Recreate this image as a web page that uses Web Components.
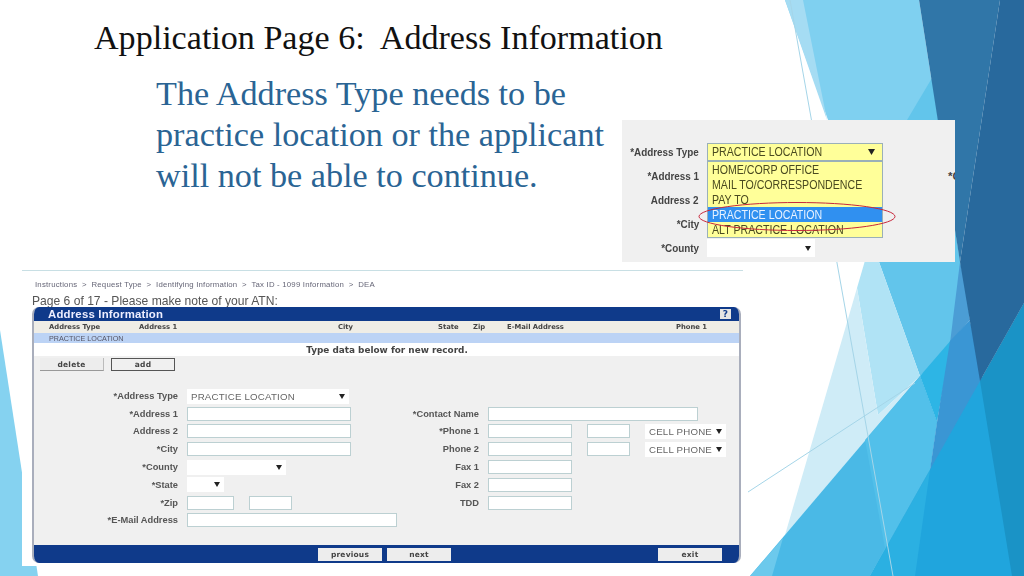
<!DOCTYPE html>
<html>
<head>
<meta charset="utf-8">
<title>Application Page 6</title>
<style>
  html, body { margin: 0; padding: 0; background: #fff; }
  body { width: 1024px; height: 576px; overflow: hidden; font-family: 'Liberation Sans', Arial, sans-serif; }
</style>
</head>
<body>
<slide-page>
  <span slot="title">Application Page 6:  Address Information</span>
  <span slot="body">The Address Type needs to be<br>practice location or the applicant<br>will not be able to continue.</span>
  <dropdown-shot slot="pictures"></dropdown-shot>
  <address-shot slot="pictures"></address-shot>
</slide-page>

<script>
// small form pieces first, they are used by both screenshots
class TextBox extends HTMLElement {
  connectedCallback() {
    this.attachShadow({ mode: 'open' });
    this.shadowRoot.innerHTML = `
      <style>
        :host {
          display: block;
          box-sizing: border-box;
          width: var(--w, 84px);
          height: 14px;
          background: #fff;
          border: 1px solid #bcd0d2;
        }
      </style>`;
    this.style.setProperty('--w', (this.getAttribute('w') || 84) + 'px');
  }
}
customElements.define('text-box', TextBox);

class FakeSelect extends HTMLElement {
  connectedCallback() {
    this.attachShadow({ mode: 'open' });
    this.shadowRoot.innerHTML = `
      <style>
        :host {
          display: flex;
          align-items: center;
          box-sizing: border-box;
          height: var(--sel-h, 15px);
          padding: 0 4px 0 4px;
          background: #fff;
          color: #666;
          font-family: 'Liberation Sans', sans-serif;
          font-size: var(--sel-size, 9.7px);
          letter-spacing: .2px;
          white-space: nowrap;
        }
        svg { flex: none; margin-left: auto; }
      </style>
      <slot></slot>
      <svg width="6" height="5" viewBox="0 0 6 5"><path d="M0 0H6L3 5Z" fill="#222"/></svg>`;
    this.style.width = (this.getAttribute('w') || 100) + 'px';
  }
}
customElements.define('fake-select', FakeSelect);

class FormRow extends HTMLElement {
  connectedCallback() {
    this.attachShadow({ mode: 'open' });
    this.shadowRoot.innerHTML = `
      <style>
        :host {
          display: flex;
          align-items: center;
          height: var(--row-h, 17.8px);
          font-family: 'Liberation Sans', sans-serif;
        }
        .label {
          display: flex;
          justify-content: flex-end;
          width: var(--label-w, 144px);
          flex: none;
          margin-right: var(--label-gap, 9px);
          font-weight: bold;
          font-size: var(--label-size, 9.3px);
          color: var(--label-color, #555);
          white-space: nowrap;
        }
        .label span {
          flex: none;
          transform: scaleX(var(--label-sx, 1));
          transform-origin: right center;
        }
        .fields { display: flex; align-items: center; }
        ::slotted(*) { margin-right: var(--field-gap, 15px); }
      </style>
      <div class="label"><span></span></div>
      <div class="fields"><slot></slot></div>`;
    this.shadowRoot.querySelector('.label span').textContent = this.getAttribute('label') || '';
  }
}
customElements.define('form-row', FormRow);

class ShotButton extends HTMLElement {
  connectedCallback() {
    this.attachShadow({ mode: 'open' });
    this.shadowRoot.innerHTML = `
      <style>
        :host {
          display: flex;
          align-items: center;
          justify-content: center;
          box-sizing: border-box;
          width: 64px;
          height: 13px;
          background: #ededed;
          color: #444;
          font: bold 7.5px 'DejaVu Sans', sans-serif;
          letter-spacing: .2px;
        }
        :host([outlined]) { border: 1px solid #555; background: #f0f0f0; }
        :host([shadowed]) { border-bottom: 1px solid #999; border-right: 1px solid #bbb; }
      </style>
      <slot></slot>`;
  }
}
customElements.define('shot-button', ShotButton);

// upper right crop with the open list
class DropdownShot extends HTMLElement {
  connectedCallback() {
    this.attachShadow({ mode: 'open' });
    this.shadowRoot.innerHTML = `
      <style>
        :host {
          position: absolute;
          left: 622px;
          top: 120px;
          width: 333px;
          height: 142px;
          background: #f0f0f0;
          overflow: hidden;
          font-family: 'Liberation Sans', sans-serif;
          --row-h: 24px;
          --label-w: 77px;
          --label-gap: 8px;
          --label-size: 11.5px;
          --label-sx: .86;
          --label-color: #444;
          --sel-h: 18px;
          --sel-size: 12px;
        }
        .rows { padding-top: 20px; }
        .list {
          position: absolute;
          left: 85px;
          top: 23px;
          width: 176px;
          box-sizing: border-box;
          border: 1px solid #9ab0b8;
          background: #ffff99;
          color: #4a4a20;
          font-size: 12px;
          line-height: 15px;
        }
        .current {
          display: flex;
          justify-content: space-between;
          align-items: center;
          height: 16px;
          padding: 0 7px 0 4px;
          border-bottom: 2px solid #9ab0b8;
        }
        .item { height: 15px; line-height: 16px; padding-left: 4px; white-space: nowrap; }
        .item.on { background: #3090f0; color: #e8f2ff; }
        .list span { display: inline-block; transform: scaleX(.885); transform-origin: left center; }
        .other { position: absolute; left: 326px; top: 50px; font: bold 11.5px 'Liberation Sans', sans-serif; color: #444; }
        svg.ring { position: absolute; left: 0; top: 0; pointer-events: none; }
      </style>
      <div class="rows">
        <form-row label="*Address Type"></form-row>
        <form-row label="*Address 1"></form-row>
        <form-row label="Address 2"></form-row>
        <form-row label="*City"></form-row>
        <form-row label="*County"><fake-select w="108"></fake-select></form-row>
      </div>
      <div class="list">
        <div class="current"><span>PRACTICE LOCATION</span>
          <svg width="7" height="6" viewBox="0 0 6 5"><path d="M0 0H6L3 5Z" fill="#222"/></svg>
        </div>
        <div class="item"><span>HOME/CORP OFFICE</span></div>
        <div class="item"><span>MAIL TO/CORRESPONDENCE</span></div>
        <div class="item"><span>PAY TO</span></div>
        <div class="item on"><span>PRACTICE LOCATION</span></div>
        <div class="item"><span>ALT PRACTICE LOCATION</span></div>
      </div>
      <div class="other">*C</div>
      <svg class="ring" width="333" height="142" viewBox="0 0 333 142">
        <ellipse cx="175" cy="96.5" rx="98" ry="14" fill="none" stroke="#c8283c" stroke-width="1"/>
      </svg>`;
  }
}
customElements.define('dropdown-shot', DropdownShot);

// the big screenshot of the address form
class AddressShot extends HTMLElement {
  connectedCallback() {
    this.attachShadow({ mode: 'open' });
    this.shadowRoot.innerHTML = `
      <style>
        :host {
          position: absolute;
          left: 22px;
          top: 268px;
          width: 723px;
          height: 298px;
          background: #fff;
          filter: blur(.35px);
          color: #444;
          font-family: 'Liberation Sans', sans-serif;
        }
        .rule { height: 1px; margin-top: 2px; width: 721px; background: #c8dfe4; }
        .crumbs {
          margin: 9px 0 0 13px;
          height: 9px;
          font-size: 7.8px;
          line-height: 9px;
          letter-spacing: .2px;
          color: #667;
          white-space: nowrap;
        }
        .note {
          margin: 6px 0 0 10px;
          height: 12px;
          font-size: 12.1px;
          line-height: 13px;
          color: #555;
          white-space: nowrap;
        }
        .panel {
          margin: 0 0 0 10px;
          width: 709px;
          height: 256px;
          box-sizing: border-box;
          display: flex;
          flex-direction: column;
          border-radius: 7px;
          overflow: hidden;
          background: #fff;
          border-left: 2px solid #a9aebc;
          border-right: 2px solid #a9aebc;
        }
        .bar {
          flex: none;
          display: flex;
          align-items: center;
          margin: 0 -2px;
          background: #0f3a8a;
        }
        .top { height: 14px; justify-content: space-between; padding: 0 10px 0 16px; color: #eef; font: bold 11.4px 'Liberation Sans', sans-serif; letter-spacing: .2px; }
        .help {
          width: 11px;
          height: 10px;
          background: #e4e4e4;
          color: #0f3a8a;
          font: bold 9px 'DejaVu Sans', sans-serif;
          text-align: center;
          line-height: 10px;
        }
        .heads, .record {
          flex: none;
          display: grid;
          grid-template-columns: 90px 199px 100px 35px 34px 169px 1fr;
          padding-left: 15px;
          align-items: center;
          font: bold 6.8px 'DejaVu Sans', sans-serif;
          white-space: nowrap;
        }
        .heads { height: 12px; background: #efede6; color: #444; }
        .record { height: 10px; background: #bcd3f5; color: #556; font: 7.2px 'Liberation Sans', sans-serif; }
        .hint {
          flex: none;
          height: 13px;
          text-align: center;
          font: bold 8.9px/15px 'DejaVu Sans', sans-serif;
          color: #444;
          padding-left: 1px;
        }
        .work { flex: 1; background: #f0f0f0; }
        .btns { display: flex; gap: 7px; padding: 2px 0 0 6px; }
        .columns { display: flex; margin-top: 16px; }
        .left { width: 366px; flex: none; }
        .left fake-select.first { margin-top: 2px; }
        .right { --label-w: 79px; }
        .foot { height: 18px; }
        .foot shot-button:nth-child(1) { margin-left: 286px; }
        .foot shot-button:nth-child(2) { margin-left: 5px; }
        .foot shot-button:nth-child(3) { margin-left: 207px; }
      </style>
      <div class="rule"></div>
      <div class="crumbs">Instructions &nbsp;&gt;&nbsp; Request Type &nbsp;&gt;&nbsp; Identifying Information &nbsp;&gt;&nbsp; Tax ID - 1099 Information &nbsp;&gt;&nbsp; DEA</div>
      <div class="note">Page 6 of 17 - Please make note of your ATN:</div>
      <div class="panel">
        <div class="bar top"><span>Address Information</span><span class="help">?</span></div>
        <div class="heads">
          <span>Address Type</span><span>Address 1</span><span>City</span><span>State</span><span>Zip</span><span>E-Mail Address</span><span>Phone 1</span>
        </div>
        <div class="record"><span>PRACTICE LOCATION</span></div>
        <div class="hint">Type data below for new record.</div>
        <div class="work">
          <div class="btns">
            <shot-button shadowed>delete</shot-button>
            <shot-button outlined>add</shot-button>
          </div>
          <div class="columns">
            <div class="left">
              <form-row label="*Address Type"><fake-select class="first" w="162">PRACTICE LOCATION</fake-select></form-row>
              <form-row label="*Address 1"><text-box w="164"></text-box></form-row>
              <form-row label="Address 2"><text-box w="164"></text-box></form-row>
              <form-row label="*City"><text-box w="164"></text-box></form-row>
              <form-row label="*County"><fake-select w="99"></fake-select></form-row>
              <form-row label="*State"><fake-select w="37"></fake-select></form-row>
              <form-row label="*Zip"><text-box w="47"></text-box><text-box w="43"></text-box></form-row>
              <form-row label="*E-Mail Address"><text-box w="210"></text-box></form-row>
            </div>
            <div class="right">
              <form-row label=""></form-row>
              <form-row label="*Contact Name"><text-box w="210"></text-box></form-row>
              <form-row label="*Phone 1"><text-box w="84"></text-box><text-box w="43"></text-box><fake-select w="81">CELL PHONE</fake-select></form-row>
              <form-row label="Phone 2"><text-box w="84"></text-box><text-box w="43"></text-box><fake-select w="81">CELL PHONE</fake-select></form-row>
              <form-row label="Fax 1"><text-box w="84"></text-box></form-row>
              <form-row label="Fax 2"><text-box w="84"></text-box></form-row>
              <form-row label="TDD"><text-box w="84"></text-box></form-row>
            </div>
          </div>
        </div>
        <div class="bar foot">
          <shot-button>previous</shot-button>
          <shot-button>next</shot-button>
          <shot-button>exit</shot-button>
        </div>
      </div>`;
  }
}
customElements.define('address-shot', AddressShot);

// slide with the facet background, headline and text
class SlidePage extends HTMLElement {
  connectedCallback() {
    const facets = [
      ['0,330 38,576 0,576', '#85d2f0'],
      ['785,0 919,0 960,262 879,262', '#7fd0f0'],
      ['785,0 803,0 827,120', '#a5dcf3'],
      ['932,78 960,262 879,262 907,120', '#62c5eb'],
      ['879,262 960,262 966,288 958,343 920,376', '#62c5eb'],
      ['871,240 879,262 920,376 878,415 857,288', '#b0e3f5'],
      ['857,288 785,535 920,376 878,415', '#cfecf7'],
      ['750,576 920,376 937,422 930,470 870,576', '#4ab9e6'],
      ['865,440 920,376 937,422 930,470 870,576 885,548', '#52c0ea'],
      ['750,576 783,538 772,576', '#6cc9ec'],
      ['920,376 952,339 937,422', '#2db5e5'],
      ['960,262 966,288 970,320 950,343', '#4b9dd5'],
      ['950,341 970,320 984,385 932,475 930,470 937,422', '#3a96d4'],
      ['870,576 1024,303 1024,576', '#20a5dd'],
      ['870,576 930,470 915,576', '#2bb0e2'],
      ['980,381 1024,303 1024,576 1012,576', '#1a93c6'],
      ['919,0 1000,0 960,262', '#3076a8'],
      ['1000,0 1024,0 1024,303 980,381 960,262', '#28699d']
    ];
    this.attachShadow({ mode: 'open' });
    this.shadowRoot.innerHTML = `
      <style>
        :host {
          display: block;
          position: relative;
          width: 1024px;
          height: 576px;
          overflow: hidden;
          background: #fff;
          font-family: 'Liberation Serif', 'Times New Roman', serif;
        }
        svg { position: absolute; left: 0; top: 0; }
        .text { position: relative; padding: 19px 0 0 94px; }
        h1 {
          margin: 0;
          font-size: 34.1px;
          line-height: 38px;
          font-weight: normal;
          color: #111;
          white-space: pre;
        }
        p {
          margin: 16px 0 0 62px;
          font-size: 34.2px;
          line-height: 41px;
          color: #2a6494;
          white-space: nowrap;
        }
      </style>
      <svg width="1024" height="576" viewBox="0 0 1024 576">
        ${facets.map(([pts, fill]) => `<polygon points="${pts}" fill="${fill}"/>`).join('')}
        <path d="M790 0L893 576M748 492L915 383" stroke="#a5d5e8" stroke-width="1" fill="none"/>
      </svg>
      <div class="text">
        <h1><slot name="title"></slot></h1>
        <p><slot name="body"></slot></p>
      </div>
      <slot name="pictures"></slot>`;
  }
}
customElements.define('slide-page', SlidePage);
</script>
</body>
</html>
